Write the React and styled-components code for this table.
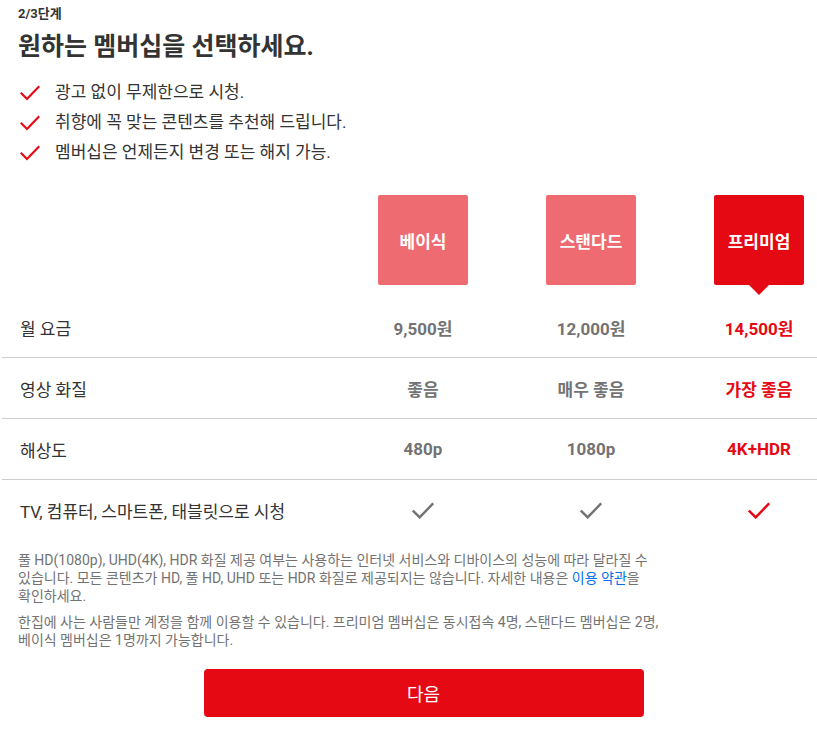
import React from "react";
import styled, { createGlobalStyle } from "styled-components";

const GlobalStyle = createGlobalStyle`
  html, body { margin: 0; padding: 0; background: #fff; }
  body {
    font-family: Roboto, "Noto Sans CJK KR", "Noto Sans", sans-serif;
    color: #333;
  }
  * { box-sizing: border-box; }
`;

const Page = styled.div`
  width: 817px;
  padding: 0 0 30px 2px;
`;

const Header = styled.div`
  padding: 6px 0 0 16px;
`;

const Step = styled.div`
  font-size: 13px;
  font-weight: 700;
  line-height: 16px;
  color: #333;
`;

const Title = styled.h1`
  margin: 10px 0 0;
  font-size: 25px;
  font-weight: 700;
  line-height: 30px;
  color: #333;
`;

const Checklist = styled.ul`
  list-style: none;
  margin: 18px 0 0;
  padding: 0;
  display: flex;
  flex-direction: column;
  gap: 5px;
`;

const CheckItem = styled.li`
  display: flex;
  align-items: center;
  gap: 15px;
  font-size: 17px;
  line-height: 25px;
  color: #333;
  padding-left: 2px;
`;

const Row = styled.div`
  display: grid;
  grid-template-columns: 1fr 90px 90px 90px;
  column-gap: 78px;
  padding-right: 13px;
  align-items: center;
  height: ${(p) => p.$h || 61}px;
  border-bottom: ${(p) => (p.$last ? "none" : "1px solid #ccc")};
`;

const PlanRow = styled(Row)`
  margin-top: 30px;
  height: auto;
  align-items: start;
  border-bottom: none;
  padding-bottom: 12px;
`;

const PlanBox = styled.div`
  position: relative;
  width: 90px;
  height: 90px;
  border-radius: 2px;
  background: ${(p) => (p.$selected ? "#e50914" : "#ef6b72")};
  color: #fff;
  font-size: 17px;
  font-weight: 700;
  display: flex;
  align-items: center;
  justify-content: center;
  &::after {
    content: "";
    display: ${(p) => (p.$selected ? "block" : "none")};
    position: absolute;
    left: 50%;
    top: 100%;
    transform: translateX(-50%);
    border-left: 10px solid transparent;
    border-right: 10px solid transparent;
    border-top: 10px solid #e50914;
  }
`;

const Label = styled.div`
  padding-left: 18px;
  font-size: 17px;
  color: #333;
  white-space: nowrap;
`;

const Value = styled.div`
  text-align: center;
  font-size: 17px;
  font-weight: ${(p) => (p.$bold ? 700 : 400)};
  color: ${(p) => (p.$selected ? "#e50914" : "#737373")};
  white-space: nowrap;
  display: flex;
  justify-content: center;
`;

const Notes = styled.div`
  padding: 10px 0 0 16px;
  font-size: 14px;
  line-height: 18px;
  color: #737373;
`;

const Note = styled.p`
  margin: 0 0 8px;
`;

const TermsLink = styled.a`
  color: #0071eb;
  text-decoration: none;
`;

const ButtonWrap = styled.div`
  display: flex;
  justify-content: center;
  margin-top: 20px;
  padding-left: 28px;
`;

const NextButton = styled.button`
  width: 440px;
  height: 48px;
  border: none;
  border-radius: 4px;
  background: #e50914;
  color: #fff;
  font-family: inherit;
  font-size: 18px;
  cursor: pointer;
`;

const Check = ({ color = "#e50914", size = 20 }) => (
  <svg width={size} height={size * 0.8} viewBox="0 0 20 16" fill="none">
    <path
      d="M1.5 8.5 L7 14 L18.5 2"
      stroke={color}
      strokeWidth="2.2"
      strokeLinecap="square"
    />
  </svg>
);

const plans = [
  { name: "베이식", price: "9,500원", quality: "좋음", res: "480p" },
  { name: "스탠다드", price: "12,000원", quality: "매우 좋음", res: "1080p" },
  { name: "프리미엄", price: "14,500원", quality: "가장 좋음", res: "4K+HDR", selected: true },
];

export default function App() {
  return (
    <Page>
      <GlobalStyle />
      <Header>
        <Step>2/3단계</Step>
        <Title>원하는 멤버십을 선택하세요.</Title>
        <Checklist>
          <CheckItem><Check />광고 없이 무제한으로 시청.</CheckItem>
          <CheckItem><Check />취향에 꼭 맞는 콘텐츠를 추천해 드립니다.</CheckItem>
          <CheckItem><Check />멤버십은 언제든지 변경 또는 해지 가능.</CheckItem>
        </Checklist>
      </Header>

      <PlanRow>
        <div />
        {plans.map((p) => (
          <PlanBox key={p.name} $selected={p.selected}>{p.name}</PlanBox>
        ))}
      </PlanRow>

      <Row>
        <Label>월 요금</Label>
        {plans.map((p) => (
          <Value key={p.name} $bold $selected={p.selected}>{p.price}</Value>
        ))}
      </Row>
      <Row>
        <Label>영상 화질</Label>
        {plans.map((p) => (
          <Value key={p.name} $bold $selected={p.selected}>{p.quality}</Value>
        ))}
      </Row>
      <Row>
        <Label>해상도</Label>
        {plans.map((p) => (
          <Value key={p.name} $bold $selected={p.selected}>{p.res}</Value>
        ))}
      </Row>
      <Row $last>
        <Label>TV, 컴퓨터, 스마트폰, 태블릿으로 시청</Label>
        {plans.map((p) => (
          <Value key={p.name}>
            <Check color={p.selected ? "#e50914" : "#737373"} size={22} />
          </Value>
        ))}
      </Row>

      <Notes>
        <Note>
          풀 HD(1080p), UHD(4K), HDR 화질 제공 여부는 사용하는 인터넷 서비스와 디바이스의 성능에 따라 달라질 수
          <br />
          있습니다. 모든 콘텐츠가 HD, 풀 HD, UHD 또는 HDR 화질로 제공되지는 않습니다. 자세한 내용은{" "}
          <TermsLink href="#">이용 약관</TermsLink>을
          <br />
          확인하세요.
        </Note>
        <Note>
          한집에 사는 사람들만 계정을 함께 이용할 수 있습니다. 프리미엄 멤버십은 동시접속 4명, 스탠다드 멤버십은 2명,
          <br />
          베이식 멤버십은 1명까지 가능합니다.
        </Note>
      </Notes>

      <ButtonWrap>
        <NextButton>다음</NextButton>
      </ButtonWrap>
    </Page>
  );
}
